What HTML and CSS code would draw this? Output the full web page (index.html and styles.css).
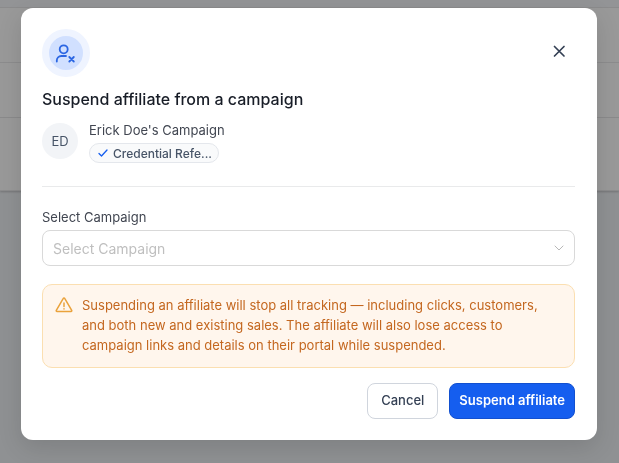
FILE: index.html
```html
<!DOCTYPE html>
<html lang="en">
<head>
    <meta charset="UTF-8">
    <meta name="viewport" content="width=device-width, initial-scale=1.0">
    <title>Suspend affiliate</title>
    <link rel="stylesheet" href="styles.css">
</head>
<body>
    <div class="page">
        <div class="list-head"></div>
        <div class="list-row"></div>
        <div class="list-row"></div>
        <div class="list-footer"></div>
    </div>
    <div class="overlay">
        <div class="modal" role="dialog" aria-modal="true" aria-labelledby="modal-title">
            <div class="modal-header">
                <div class="modal-icon">
                    <svg width="24" height="24" viewBox="0 0 24 24" fill="none" stroke="currentColor" stroke-width="1.800" stroke-linecap="round" stroke-linejoin="round">
                        <circle cx="9.700" cy="8.300" r="4"/>
                        <path d="M2.800 20.500v-1a4.500 4.500 0 0 1 4.500-4.500h4.700"/>
                        <path d="M15.300 16l4.500 4.500M19.800 16l-4.500 4.500"/>
                    </svg>
                </div>
                <button class="close" type="button" aria-label="Close">
                    <svg width="20" height="20" viewBox="0 0 20 20" fill="none" stroke="currentColor" stroke-width="1.700" stroke-linecap="round">
                        <path d="M5.500 5.500l9.500 9.500M15 5.500l-9.500 9.500"/>
                    </svg>
                </button>
            </div>
            <h2 class="title" id="modal-title">Suspend affiliate from a campaign</h2>
            <div class="affiliate">
                <div class="avatar">ED</div>
                <div class="affiliate-info">
                    <div class="affiliate-name">Erick Doe's Campaign</div>
                    <div class="chip">
                        <svg width="12" height="12" viewBox="0 0 12 12" fill="none" stroke="currentColor" stroke-width="1.300" stroke-linecap="round" stroke-linejoin="round">
                            <path d="M2 6.500l2.500 2.500L10 3"/>
                        </svg>
                        <span>Credential Refe...</span>
                    </div>
                </div>
            </div>
            <hr class="divider">
            <label class="label" for="campaign">Select Campaign</label>
            <div class="select-wrap">
                <select class="select" id="campaign">
                    <option value="">Select Campaign</option>
                </select>
                <svg class="chevron" width="12" height="12" viewBox="0 0 12 12" fill="none" stroke="currentColor" stroke-linecap="round" stroke-linejoin="round">
                    <path d="M2 4l4 4 4-4"/>
                </svg>
            </div>
            <div class="alert">
                <svg class="alert-icon" width="20" height="20" viewBox="0 0 20 20" fill="none" stroke="currentColor" stroke-width="1.500" stroke-linecap="round" stroke-linejoin="round">
                    <path d="M9.300 3.400L2.300 15.400a.8.8 0 0 0 .7 1.200h14a.8.8 0 0 0 .7-1.200L10.700 3.400a.8.8 0 0 0-1.400 0z"/>
                    <path d="M10 8v3.500M10 13.800v.1"/>
                </svg>
                <p class="alert-text">Suspending an affiliate will stop all tracking — including clicks, customers, and both new and existing sales. The affiliate will also lose access to campaign links and details on their portal while suspended.</p>
            </div>
            <div class="actions">
                <button class="btn" type="button">Cancel</button>
                <button class="btn btn-primary" type="button">Suspend affiliate</button>
            </div>
        </div>
    </div>
</body>
</html>
```

FILE: styles.css
```css
* {
    box-sizing: border-box;
}
body {
    margin: 0;
    min-height: 100vh;
    background-color: #8f9193;
    font-family: Inter, "Liberation Sans", sans-serif;
    font-size: 13px;
    color: #414651;
}
.list-head {
    height: 8px;
    background-color: #939496;
    border-bottom: 1px solid #8b8b8c;
}
.list-row,
.list-footer {
    height: 55px;
    background-color: #999999;
    border-bottom: 1px solid #8c8c8d;
}
.list-footer {
    height: 73px;
    box-shadow: 0 1px 2px rgba(0, 0, 0, 0.2);
}
.overlay {
    position: fixed;
    inset: 0;
    overflow: auto;
    padding: 8px 22px 22px 21px;
}
.modal {
    max-width: 576px;
    margin: 0 auto;
    padding: 21px 22px 21px 21px;
    background-color: #ffffff;
    border-radius: 12px;
    box-shadow: 0 8px 24px rgba(0, 0, 0, 0.12);
}
.modal-header {
    display: flex;
    justify-content: space-between;
    align-items: flex-start;
}
.modal-icon {
    display: flex;
    align-items: center;
    justify-content: center;
    width: 48px;
    height: 48px;
    border: 7px solid #eff4ff;
    border-radius: 50%;
    background-color: #d1e0ff;
    color: #2b66e3;
}
.close {
    display: flex;
    align-items: center;
    justify-content: center;
    width: 32px;
    height: 44px;
    padding: 0;
    border: none;
    background: none;
    color: #344054;
    cursor: pointer;
}
.title {
    margin: 10px 0 11px;
    font-size: 16px;
    font-weight: 500;
    line-height: 24px;
    color: #181d27;
}
.affiliate {
    display: flex;
    align-items: flex-start;
    gap: 11px;
}
.avatar {
    display: flex;
    align-items: center;
    justify-content: center;
    width: 36px;
    height: 36px;
    margin-top: 1px;
    border-radius: 50%;
    background-color: #f2f4f7;
    color: #475467;
}
.affiliate-name {
    line-height: 16px;
    margin-bottom: 5px;
}
.chip {
    display: flex;
    align-items: center;
    gap: 4px;
    width: fit-content;
    height: 20px;
    padding: 0 6px 0 7px;
    border: 1px solid #e4e7ec;
    border-radius: 10px;
    background-color: #f9fafb;
    font-size: 12px;
    font-weight: 500;
    color: #475467;
}
.chip svg {
    color: #155eef;
}
.divider {
    height: 1px;
    margin: 23px 0 22px;
    border: none;
    background-color: #e9eaeb;
}
.label {
    display: block;
    margin-bottom: 4px;
    line-height: 17px;
}
.select-wrap {
    position: relative;
}
.select {
    display: block;
    width: 100%;
    height: 36px;
    padding: 0 32px 0 10px;
    border: 1px solid #d9d9d9;
    border-radius: 8px;
    background-color: #ffffff;
    appearance: none;
    font-family: inherit;
    font-size: 14px;
    color: #bfbfbf;
}
.chevron {
    position: absolute;
    top: 12px;
    right: 10px;
    color: #b8b8b8;
    pointer-events: none;
}
.alert {
    display: flex;
    gap: 8px;
    margin-top: 18px;
    padding: 10px 11px 12px;
    border: 1px solid #fbdfb1;
    border-radius: 10px;
    background-color: #fff6ed;
    color: #c4671f;
}
.alert-icon {
    flex: none;
    color: #eaa23b;
}
.alert-text {
    max-width: 460px;
    margin: 0;
    line-height: 20px;
}
.actions {
    display: flex;
    justify-content: flex-end;
    gap: 11px;
    margin-top: 15px;
}
.btn {
    height: 36px;
    padding: 0 13px 3px;
    border: 1px solid #d0d5dd;
    border-radius: 8px;
    background-color: #ffffff;
    font-family: inherit;
    font-size: 13px;
    font-weight: 500;
    color: #344054;
    cursor: pointer;
}
.btn-primary {
    padding: 0 9px 3px;
    border-color: #1250d0;
    background-color: #155eef;
    font-weight: 600;
    color: #ffffff;
}
```
